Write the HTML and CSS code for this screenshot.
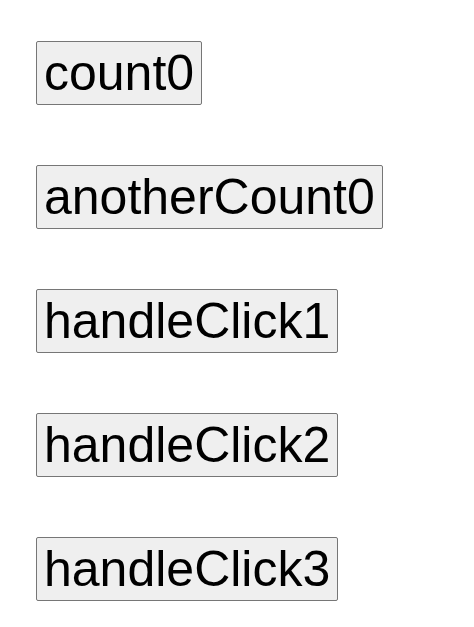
FILE: index.html
```html
<!DOCTYPE html>
<html>
<head>
<meta charset="utf-8">
<link rel="stylesheet" href="styles.css">
</head>
<body>
<div class="list">
  <div class="row"><button class="btn">count0</button></div>
  <div class="row"><button class="btn">anotherCount0</button></div>
  <div class="row"><button class="btn">handleClick1</button></div>
  <div class="row"><button class="btn">handleClick2</button></div>
  <div class="row"><button class="btn">handleClick3</button></div>
</div>
</body>
</html>
```
FILE: styles.css
```css
html, body {
  margin: 0;
  padding: 0;
  background: #ffffff;
}
.list {
  display: flex;
  flex-direction: column;
  align-items: flex-start;
  padding: 41px 0 0 36px;
  gap: 60px;
}
.row {
  display: flex;
}
.btn {
  font-family: "Liberation Sans", Arial, sans-serif;
  font-size: 50px;
  line-height: 58px;
  color: #000000;
  background: #efefef;
  border: 1px solid #767676;
  border-radius: 2px;
  padding: 2px 7px;
  margin: 0;
}
```
